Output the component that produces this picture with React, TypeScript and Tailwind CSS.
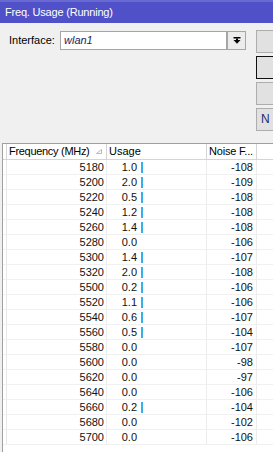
import React from "react";

type Row = { freq: number; usage: string; noise: number };

const rows: Row[] = [
  { freq: 5180, usage: "1.0", noise: -108 },
  { freq: 5200, usage: "2.0", noise: -109 },
  { freq: 5220, usage: "0.5", noise: -108 },
  { freq: 5240, usage: "1.2", noise: -108 },
  { freq: 5260, usage: "1.4", noise: -108 },
  { freq: 5280, usage: "0.0", noise: -106 },
  { freq: 5300, usage: "1.4", noise: -107 },
  { freq: 5320, usage: "2.0", noise: -108 },
  { freq: 5500, usage: "0.2", noise: -106 },
  { freq: 5520, usage: "1.1", noise: -106 },
  { freq: 5540, usage: "0.6", noise: -107 },
  { freq: 5560, usage: "0.5", noise: -104 },
  { freq: 5580, usage: "0.0", noise: -107 },
  { freq: 5600, usage: "0.0", noise: -98 },
  { freq: 5620, usage: "0.0", noise: -97 },
  { freq: 5640, usage: "0.0", noise: -106 },
  { freq: 5660, usage: "0.2", noise: -104 },
  { freq: 5680, usage: "0.0", noise: -102 },
  { freq: 5700, usage: "0.0", noise: -106 },
];

export default function App() {
  return (
    <div className="w-[273px] h-[452px] overflow-hidden bg-[#f0f0f0] font-['Liberation_Sans',Arial,sans-serif] text-[11px] text-black">
      {/* Title bar */}
      <div className="h-[23px] bg-[#5050c9] border-t-2 border-[#6a6ad3] pl-[5px] flex items-center text-white tracking-[-0.2px]">
        Freq. Usage (Running)
      </div>

      {/* Top controls */}
      <div className="flex h-[120px]">
        <div className="w-[256px] shrink-0 pt-[8px] pl-[9px] flex items-start">
          <span className="w-[51px] leading-[19px]">Interface:</span>
          <div className="w-[167px] h-[19px] border border-[#a6a6a6] bg-white italic text-[#1c1c5e] pl-[3px] leading-[17px]">
            wlan1
          </div>
          <div className="w-[19px] h-[19px] border border-[#a6a6a6] bg-[#ececec] flex items-center justify-center">
            <svg width="8" height="7" viewBox="0 0 8 7">
              <rect x="0.5" y="0" width="7" height="1.5" fill="#000" />
              <rect x="3" y="1.5" width="2" height="2" fill="#000" />
              <polygon points="0.5,3 7.5,3 4,6.8" fill="#000" />
            </svg>
          </div>
        </div>
        <div className="flex flex-col gap-[3px] pt-[7px]">
          <div className="w-[80px] h-[23px] border border-[#adadad] bg-[#e1e1e1]" />
          <div className="w-[80px] h-[23px] border border-[#111] bg-[#e1e1e1]" />
          <div className="w-[80px] h-[23px] border border-[#adadad] bg-[#e1e1e1]" />
          <div className="w-[80px] h-[23px] border border-[#adadad] bg-[#e1e1e1] pl-[4px] leading-[21px] text-[12px] text-[#1b2a6b]">
            N
          </div>
        </div>
      </div>

      {/* Table */}
      <div className="ml-[2px] h-[309px] bg-white border-l border-t border-[#a0a0a0]">
        {/* Header */}
        <div className="flex h-[16px] border-b border-[#d5d5d5] leading-[15px]">
          <div className="w-[4px] border-r border-[#d5d5d5]" />
          <div className="w-[100px] border-r border-[#d5d5d5] pl-[2px] flex items-center tracking-[-0.3px]">
            <span>Frequency (MHz)</span>
            <svg className="ml-[7px]" width="6" height="5" viewBox="0 0 6 5">
              <polygon points="5.5,0.5 5.5,4.5 0.5,4.5" fill="none" stroke="#b8b8b8" strokeWidth="1" />
            </svg>
          </div>
          <div className="w-[100px] border-r border-[#d5d5d5] pl-[2px]">Usage</div>
          <div className="w-[50px] border-r border-[#d5d5d5] pl-[2px] tracking-[-0.2px]">Noise F...</div>
          <div className="flex-1" />
        </div>
        {/* Rows */}
        {rows.map((r) => (
          <div key={r.freq} className="flex h-[15px] border-b border-[#f0f0f0] leading-[14px] text-[#111]">
            <div className="w-[4px] border-r border-[#e6e6e6]" />
            <div className="w-[100px] border-r border-[#ececec] pr-[2px] text-right">{r.freq}</div>
            <div className="w-[100px] border-r border-[#ececec] flex items-center">
              <span className="w-[30px] text-right">{r.usage}</span>
              {r.usage !== "0.0" && <span className="ml-[4px] w-[2px] h-[11px] bg-[#35b0ea]" />}
            </div>
            <div className="w-[50px] border-r border-[#ececec] pr-[3px] text-right">{r.noise}</div>
            <div className="flex-1" />
          </div>
        ))}
      </div>
    </div>
  );
}
